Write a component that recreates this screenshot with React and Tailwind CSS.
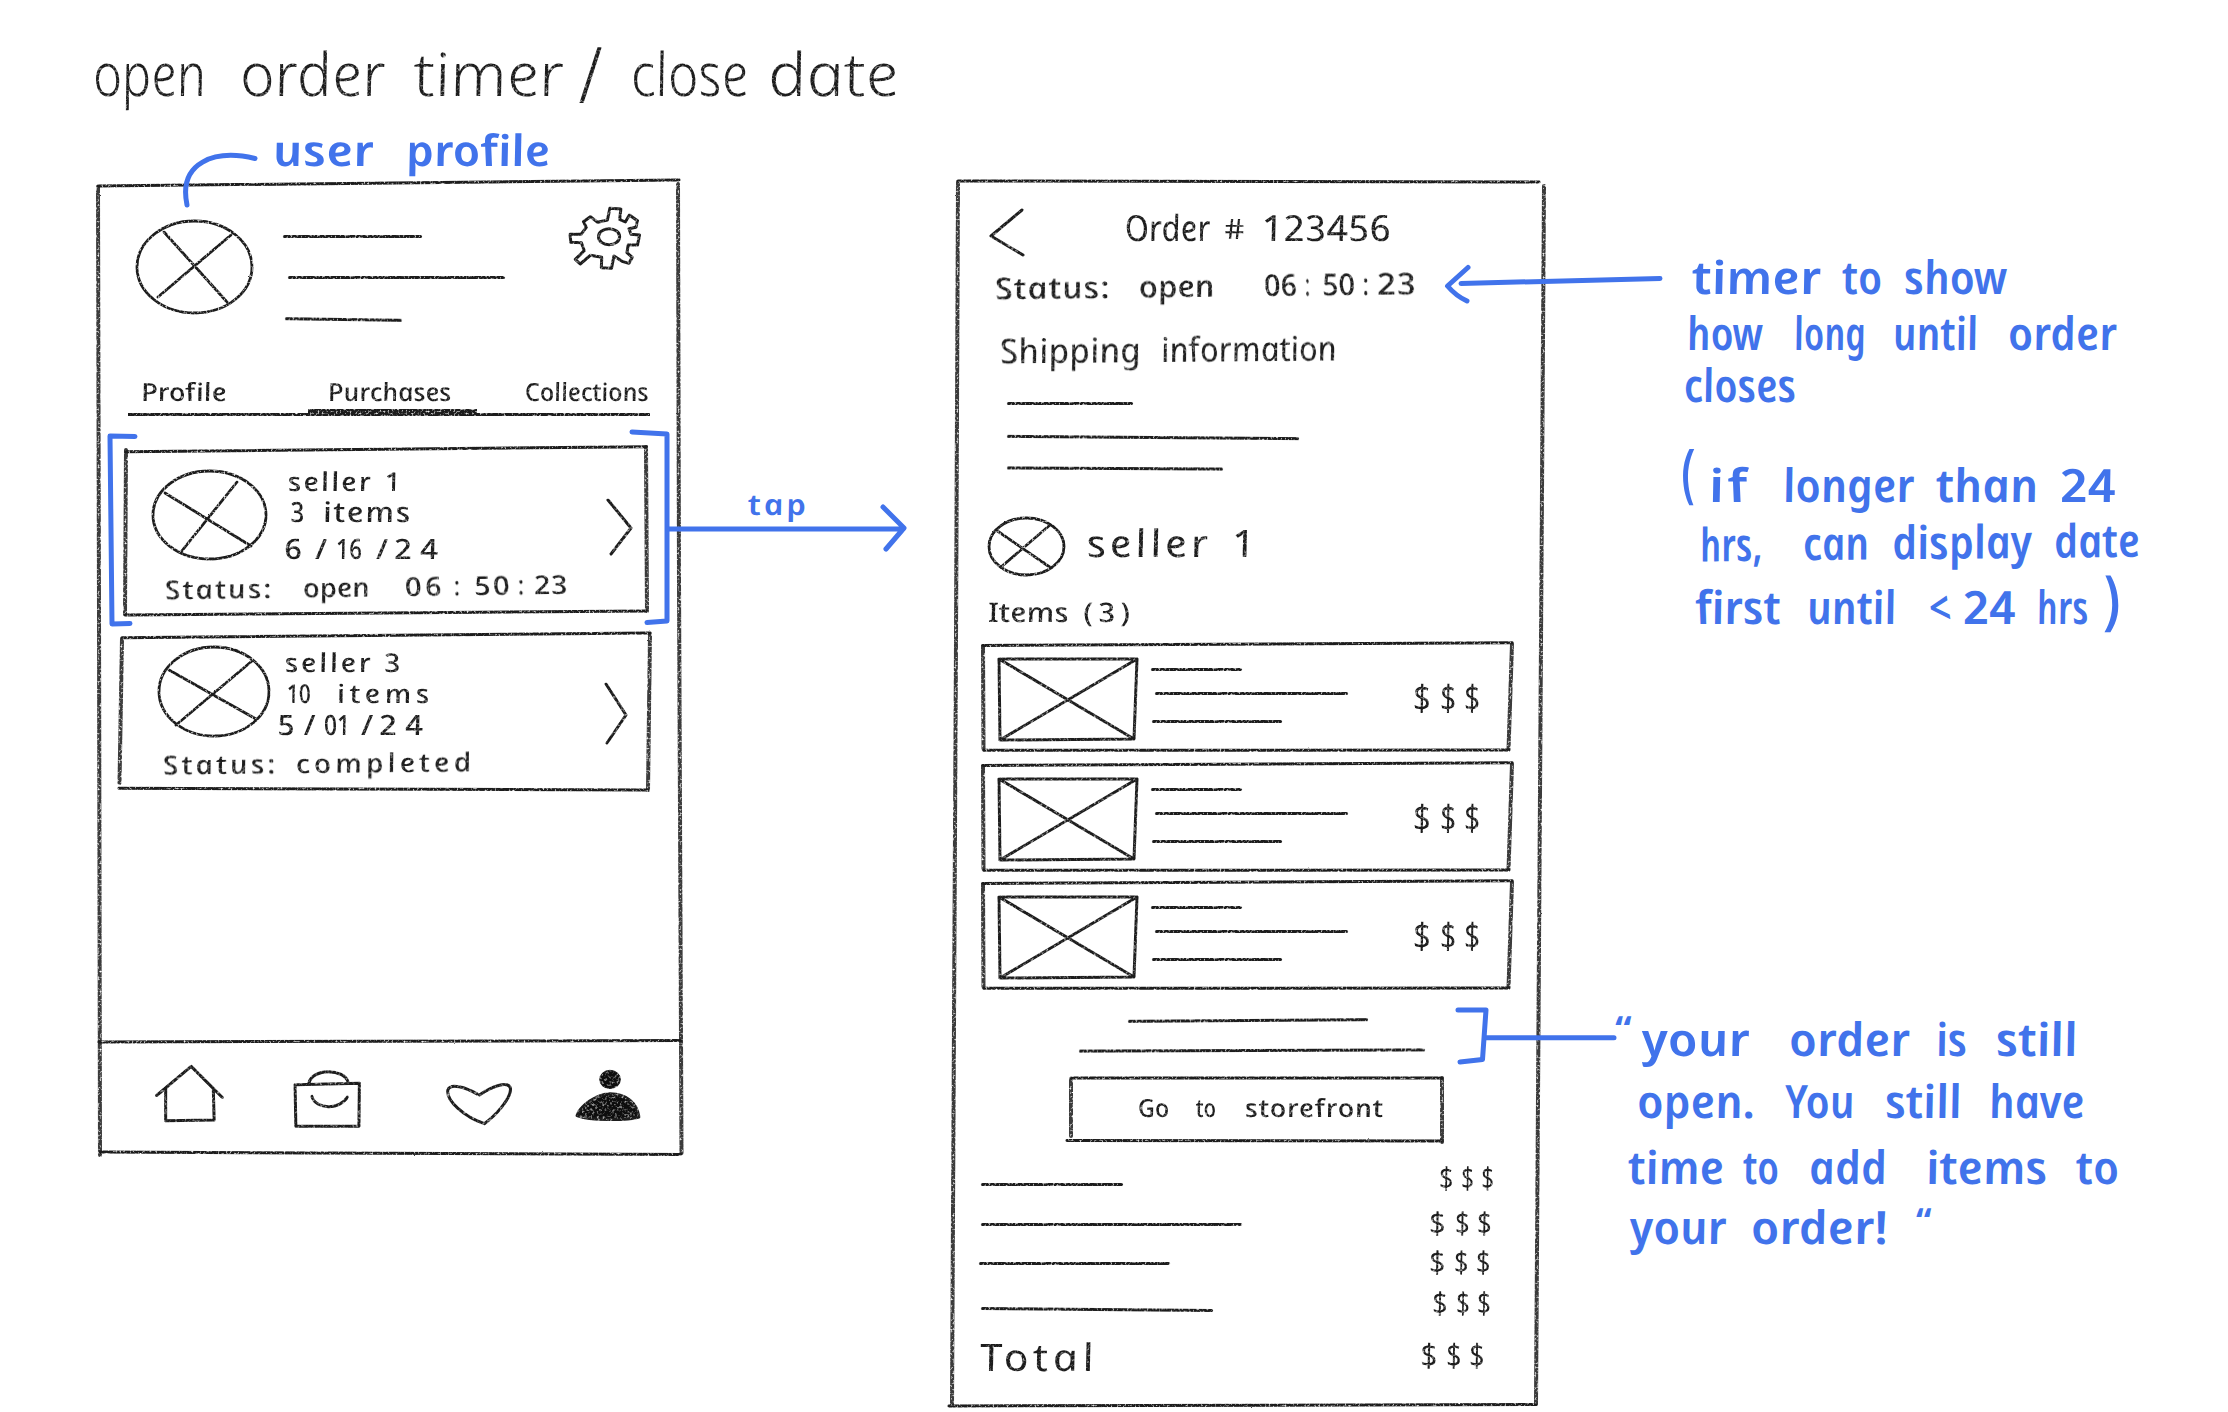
import { useLayoutEffect, useRef, useState } from "react";

const INK = "#1c1c1c";
const BLUE = "#4173eb";

// The italic f hangs below the line, so that letter is set upright
const renderLetters = (text) =>
    text.split(/(f)/).map((part, i) =>
        part === "f" ? (
            <span key={i} className="inline-block origin-[0_65%] -skew-x-[9deg] not-italic">
                f
            </span>
        ) : (
            part
        )
    );

// One handwritten word, fitted to the width it takes on the page:
// long words are squeezed, short ones get their letters spread out
const Word = ({ text, width, gap = 0, className = "" }) => {
    const ref = useRef(null);
    const [fit, setFit] = useState({ scale: 1, spacing: 0 });

    useLayoutEffect(() => {
        const ratio = width / ref.current.offsetWidth;
        if (ratio < 1 || text.length === 1) {
            setFit({ scale: Math.min(ratio, 1.15), spacing: 0 });
            return;
        }
        const scale = Math.min(ratio, 1.16);
        setFit({ scale, spacing: (width / scale - ref.current.offsetWidth) / (text.length - 1) });
    }, [text, width]);

    return (
        <span className={`block shrink-0 text-left ${className}`} style={{ width, marginLeft: gap }}>
            <span className="inline-block origin-[0_62%]" style={{ transform: `scaleX(${fit.scale}) skewX(11deg)`, letterSpacing: fit.spacing }}>
                <span ref={ref} className="inline-block whitespace-nowrap">
                    {renderLetters(text)}
                </span>
            </span>
        </span>
    );
};

// words: [text, width, gap before, extra classes]
const Words = ({ words, className = "" }) => (
    <div className={`flex shrink-0 font-['Noto_Sans','Open_Sans',sans-serif] italic leading-none ${className}`}>
        {words.map(([text, width, gap, extra], i) => (
            <Word key={i} text={text} width={width} gap={gap} className={extra} />
        ))}
    </div>
);

const Pencil = ({ words, className = "" }) => <Words words={words} className={`[filter:url(#graphite)] ${className}`} />;

const Price = ({ width = 66, className = "" }) => (
    <Pencil words={[["$", width * 0.28], ["$", width * 0.25, width * 0.12], ["$", width * 0.25, width * 0.1]]} className={className} />
);

const Rule = ({ className = "" }) => (
    <div className={`h-[3px] shrink-0 rounded-full bg-[#1c1c1c] [filter:url(#pencil)] ${className}`} />
);

// Pencil strokes drawn around a block, relative to its top left corner.
// The upright strokes are broader and paler than the level ones.
const Outline = ({ level, upright }) => (
    <svg className="pointer-events-none absolute inset-0 size-full overflow-visible" fill="none" strokeLinecap="round">
        <path d={upright} stroke="#3a3a3a" strokeWidth="4" filter="url(#pencil)" />
        <path d={level} stroke={INK} strokeWidth="3" filter="url(#pencil)" />
    </svg>
);

const Avatar = ({ cross, viewBox, className = "" }) => {
    const [, , w, h] = viewBox.split(" ").map(Number);
    return (
        <svg className={`shrink-0 overflow-visible ${className}`} viewBox={viewBox} fill="none" stroke={INK} strokeWidth="2.8" strokeLinecap="round">
            <g filter="url(#pencil)">
                <ellipse cx={w / 2} cy={h / 2} rx={w / 2 - 1} ry={h / 2 - 1} />
                <path d={cross} />
            </g>
        </svg>
    );
};

const Icon = ({ viewBox, className = "", children }) => (
    <svg className={`shrink-0 overflow-visible [filter:url(#graphite)] ${className}`} viewBox={viewBox} preserveAspectRatio="none" fill="none" stroke={INK} strokeWidth="3" strokeLinecap="round" strokeLinejoin="round">
        {children}
    </svg>
);

const Line = ({ d, fill }) => <path d={d} fill={fill} vectorEffect="non-scaling-stroke" />;

const ProfileScreen = () => (
    <section className="relative mt-[2px] ml-[98px] flex h-[972px] w-[583px] shrink-0 flex-col">
        <Outline
            level="M0 3 L581 -3 M1 859 L583 857.500 M2 969 L583 971.500"
            upright="M0 4 L1 430 L2 972 M580 1 L581 400 L583.500 970"
        />

        <div className="mt-[37px] flex h-[159px] pl-[38px]">
            <Avatar viewBox="0 0 117 94" className="h-[94px] w-[117px]" cross="M28 12 L91 82 M95 15 L22 77" />
            <div className="mt-[15px] ml-[30px] w-[285px]">
                <Rule className="w-[139px]" />
                <Rule className="mt-[38px] ml-[5px] w-[217px]" />
                <Rule className="mt-[39px] ml-[2px] w-[117px] rotate-[0.8deg]" />
            </div>
            <Icon viewBox="1195 558 182 192" className="-mt-[14px] h-[64px] w-[74px]">
                <Line d="M1292 600 L1298 565 L1325 567 L1322 598 L1336 606 L1346 585 L1366 602 L1362 622 L1345 626 L1350 643 L1371 645 L1366 675 L1343 675 L1340 698 L1353 712 L1345 730 L1330 725 L1308 708 L1302 745 L1277 743 L1278 712 L1250 706 L1225 732 L1213 718 L1235 692 L1228 668 L1202 667 L1200 643 L1227 643 L1240 622 L1233 605 L1250 590 L1268 607 Z" />
                <ellipse cx="1296" cy="650" rx="26" ry="24" vectorEffect="non-scaling-stroke" />
            </Icon>
        </div>

        <Pencil className="ml-[43px] text-[25px] font-medium" words={[["Profile", 86], ["Purchases", 124, 101], ["Collections", 124, 73]]} />
        <div className="mt-[5px] ml-[30px] h-[7px] w-[522px] shrink-0 border-b-[3px] border-[#1c1c1c] [filter:url(#pencil)]">
            <div className="ml-[180px] h-[5px] w-[169px] bg-[#1c1c1c]" />
        </div>

        <article className="relative mt-[33px] ml-[27px] h-[164px] w-[522px] shrink-0 pt-[21px]">
            <Outline level="M0.700 2.700 L521.500 -2.300 M521.500 162 L0 166" upright="M1 1 L0 165 M521 -2 L522 162" />
            <div className="flex h-[91px] pl-[27px]">
                <Avatar viewBox="0 0 115 90" className="h-[90px] w-[115px]" cross="M13 23 L99 76 M85 12 L29 82" />
                <div className="-mt-[2px] ml-[21px] w-[172px]">
                    <Pencil className="text-[26px] font-medium" words={[["seller", 83], ["1", 15, 14]]} />
                    <Pencil className="mt-[3px] ml-[2px] text-[28px] font-medium" words={[["3", 14], ["items", 87, 19]]} />
                    <Pencil className="mt-[9px] -ml-[4px] text-[28px] font-medium" words={[["6", 19], ["/", 13, 12], ["16", 26, 8], ["/", 14, 14], ["24", 44, 4]]} />
                </div>
                <Icon viewBox="0 0 23 54" className="mt-[30px] ml-[148px] h-[54px] w-[23px]">
                    <Line d="M0 0 L23 28 L3 54" />
                </Icon>
            </div>
            <Pencil className="mt-[12px] ml-[40px] -rotate-[0.800deg] text-[26px] font-medium" words={[["Status:", 106], ["open", 67, 32], ["06", 37, 35], [":", 6, 12], ["50", 36, 14], [":", 6, 8], ["23", 34, 10]]} />
        </article>

        <article className="relative mt-[23px] ml-[21px] h-[153px] w-[531px] shrink-0 pt-[10px]">
            <Outline level="M3 1.700 L531 -3 M0 152.300 L529 154" upright="M3 3 L0.500 147 M531 -2 L529 154" />
            <div className="flex h-[91px] pl-[39px]">
                <Avatar viewBox="0 0 112 91" className="h-[91px] w-[112px]" cross="M11 24 L98 73 M94 15 L18 79" />
                <div className="mt-[3px] ml-[15px] w-[161px]">
                    <Pencil className="text-[26px] font-medium" words={[["seller", 86], ["3", 17, 13]]} />
                    <Pencil className="mt-[5px] ml-[2px] text-[26px] font-medium" words={[["10", 24], ["items", 92, 26]]} />
                    <Pencil className="mt-[4px] -ml-[8px] text-[28px] font-medium" words={[["5", 17], ["/", 12, 10], ["01", 26, 8], ["/", 13, 11], ["24", 44, 5]]} />
                </div>
                <Icon viewBox="0 0 20 59" className="mt-[38px] ml-[160px] h-[59px] w-[20px]">
                    <Line d="M0 0 L20 31 L1 59" />
                </Icon>
            </div>
            <Pencil className="mt-[12px] ml-[44px] -rotate-[0.600deg] text-[26px] font-medium" words={[["Status:", 112], ["completed", 175, 21]]} />
        </article>

        <nav className="mt-[252px] flex h-[113px]">
            <Icon viewBox="184 132 168 172" className="mt-[24px] ml-[57px] h-[57px] w-[69px]">
                <Line d="M188 224 L272 136 L348 230 M210 205 L210 300 L328 298 L326 207" />
            </Icon>
            <Icon viewBox="522 148 166 174" className="mt-[29px] ml-[69px] h-[58px] w-[68px]">
                <Line d="M527 192 L684 188 L683 317 L529 317 Z M561 187 C568 142 648 142 657 186 M568 227 C578 268 636 268 655 229" />
            </Icon>
            <Icon viewBox="894 188 166 130" className="mt-[41px] ml-[84px] h-[43px] w-[68px]">
                <Line d="M972 224 C945 205 908 190 901 212 C896 245 942 294 990 314 C1015 292 1055 240 1054 208 C1050 182 1010 200 978 227" />
            </Icon>
            <Icon viewBox="1214 148 162 158" className="mt-[28px] ml-[62px] h-[53px] w-[66px]">
                <ellipse cx="1300" cy="179" rx="25" ry="27" fill="#111" />
                <Line fill="#111" d="M1219 287 C1226 258 1268 222 1300 222 C1340 222 1366 250 1371 291 C1340 302 1250 302 1219 287 Z" />
            </Icon>
        </nav>
    </section>
);

const ItemRow = ({ className = "" }) => (
    <li className={`relative flex h-[105px] w-[530px] shrink-0 pt-[14px] pl-[17px] ${className}`}>
        <Outline level="M0.500 0.500 L530 -2.300 M526.500 105 L1.500 105.300" upright="M1 2 L1.500 104 M530 -1 L526.500 105" />
        <Icon viewBox="0 0 138 81" className="h-[81px] w-[138px]">
            <path d="M0 0 L138 0 L135 80 L1 81 Z L135 80 M138 0 L1 81" />
        </Icon>
        <div className="mt-[9px] ml-[14px] w-[197px]">
            <Rule className="w-[91px]" />
            <Rule className="mt-[21px] ml-[4px] w-[193px]" />
            <Rule className="mt-[25px] ml-[1px] w-[130px]" />
        </div>
        <Price className="mt-[21px] ml-[65px] text-[36px]" width={68} />
    </li>
);

const OrderScreen = () => (
    <section className="relative flex h-[1225px] w-[593px] shrink-0 flex-col">
        <Outline
            level="M7 0 L588 1 M-2 1225 L585 1223.500"
            upright="M7 1 L5 460 L1 1224 M593 5 L590 460 L585 1223"
        />

        <div className="mt-[29px] flex h-[46px] pl-[40px]">
            <Icon viewBox="0 0 32 46" className="h-[46px] w-[32px]">
                <Line d="M31 0 L0 26 L32 45" />
            </Icon>
            <Pencil className="ml-[102px] text-[36px]" words={[["Order", 86], ["#", 22, 13, "text-[28px] pt-[4px]"], ["123456", 129, 16]]} />
        </div>
        <Pencil className="mt-[14px] ml-[44px] -rotate-[0.700deg] text-[30px] font-medium" words={[["Status:", 115], ["open", 76, 29], ["06", 33, 49], [":", 5, 8], ["50", 33, 12], [":", 6, 8], ["23", 39, 8]]} />
        <Pencil className="mt-[31px] ml-[49px] -rotate-[0.500deg] text-[34px]" words={[["Shipping", 141], ["information", 176, 20]]} />
        <Rule className="mt-[37px] ml-[56px] w-[126px]" />
        <Rule className="mt-[31px] ml-[56px] w-[292px] rotate-[0.450deg]" />
        <Rule className="mt-[28px] ml-[56px] w-[216px] rotate-[0.300deg]" />

        <div className="mt-[47px] flex h-[59px] pl-[37px]">
            <Avatar viewBox="0 0 77 59" className="h-[59px] w-[77px]" cross="M8 13 L63 51 M62 8 L13 50" />
            <Pencil className="mt-[6px] ml-[22px] text-[38px]" words={[["seller", 121], ["1", 23, 24]]} />
        </div>
        <Pencil className="mt-[22px] ml-[37px] text-[27px] font-medium" words={[["Items", 81], ["(3)", 47, 14]]} />

        <ul className="mt-[20px] flex flex-col pl-[31px]">
            <ItemRow />
            <ItemRow className="mt-[15px]" />
            <ItemRow className="mt-[13px]" />
        </ul>

        <Rule className="mt-[31px] ml-[177px] w-[240px] -rotate-[0.400deg]" />
        <Rule className="mt-[27px] ml-[128px] w-[346px] -rotate-[0.200deg]" />

        <button type="button" className="relative mt-[26px] ml-[117px] h-[63px] w-[374px] shrink-0 pb-[5px] pl-[70px]">
            <Outline level="M3 0 L374 0 M-1 62.500 L374 63" upright="M3 2 L3 58 M374 0 L374 64" />
            <Pencil className="text-[25px] font-medium" words={[["Go", 31], ["to", 20, 27], ["storefront", 138, 29]]} />
        </button>

        <div className="mt-[21px] ml-[30px] flex h-[30px]">
            <Rule className="mt-[21px] w-[142px]" />
            <Price className="mt-px ml-[316px] text-[30px]" width={56} />
        </div>
        <div className="mt-[15px] ml-[30px] flex h-[30px]">
            <Rule className="mt-[16px] w-[261px]" />
            <Price className="mt-px ml-[187px] text-[30px]" width={64} />
        </div>
        <div className="mt-[9px] ml-[28px] flex h-[30px]">
            <Rule className="mt-[16px] w-[191px]" />
            <Price className="mt-px ml-[259px] text-[30px]" width={63} />
        </div>
        <div className="mt-[12px] ml-[30px] flex h-[30px]">
            <Rule className="mt-[20px] w-[232px] rotate-[0.500deg]" />
            <Price className="ml-[219px] text-[30px]" width={60} />
        </div>
        <div className="mt-[19px] ml-[29px] flex h-[40px]">
            <Pencil className="text-[38px]" words={[["Total", 114]]} />
            <Price className="mt-[2px] ml-[326px] text-[32px]" width={66} />
        </div>
    </section>
);

const Notes = () => (
    <aside className="w-[614px] shrink-0 pl-[71px] text-[46px] font-semibold text-[#4173eb]">
        <Words className="mt-[72px] ml-[77px]" words={[["timer", 129], ["to", 40, 21], ["show", 103, 22]]} />
        <Words className="mt-[10px] ml-[72px]" words={[["how", 76], ["long", 72, 31], ["until", 85, 27], ["order", 109, 30]]} />
        <Words className="mt-[6px] ml-[69px]" words={[["closes", 112]]} />

        <Words className="mt-[54px] ml-[66px]" words={[["(", 14, 0, "-mt-[12px] scale-y-[1.4]"], ["if", 38, 14], ["longer", 132, 36], ["than", 102, 21], ["24", 56, 22]]} />
        <Words className="mt-[11px] ml-[85px] -rotate-[0.600deg]" words={[["hrs,", 62], ["can", 66, 41], ["display", 140, 23], ["date", 86, 22]]} />
        <Words className="mt-[19px] ml-[80px]" words={[["first", 86], ["until", 89, 26], ["<", 21, 33], ["24", 53, 13], ["hrs", 51, 21], [")", 18, 16, "scale-y-[1.4] -mt-[8px]"]]} />

        <Words className="mt-[386px]" words={[["“", 17, 0, "-mt-[4px] text-[36px]"], ["your", 108, 10], ["order", 121, 39], ["is", 31, 26], ["still", 82, 29]]} />
        <Words className="mt-[16px] ml-[22px]" words={[["open.", 118], ["You", 70, 30], ["still", 77, 30], ["have", 96, 27]]} />
        <Words className="mt-[20px] ml-[13px]" words={[["time", 96], ["to", 36, 19], ["add", 78, 30], ["items", 121, 39], ["to", 43, 29]]} />
        <Words className="mt-[14px] ml-[15px]" words={[["your", 97], ["order!", 137, 24], ["“", 16, 28, "text-[36px]"]]} />
    </aside>
);

// Blue brackets and arrows that run over the screens
const Connectors = () => (
    <svg className="pointer-events-none absolute inset-0 h-[1412px] w-[2228px]" fill="none" stroke={BLUE} strokeWidth="5" strokeLinecap="round" strokeLinejoin="round">
        <path d="M255 158.500 C215 149 178 162 187 205" />
        <path d="M135 436.500 L110 436 L112 624 L130 623.500" />
        <path d="M632 432 L667 434 L667 621 L647 622.500" />
        <path d="M668 529 L903 529 M883 507 L904 528 L886 549" />
        <path d="M1660 278.500 L1461 283.500 M1468 267.500 L1447.500 286 Q1456 296 1467 301" />
        <path d="M1458 1010 L1486 1010 L1482.500 1059.500 L1460 1062 M1485 1037.700 L1614 1037.700" />
    </svg>
);

const App = () => (
    <main className="relative h-[1412px] w-[2228px] overflow-hidden bg-white text-[#1c1c1c]">
        <svg className="absolute size-0" aria-hidden="true">
            <filter id="pencil" filterUnits="userSpaceOnUse" x="-10" y="-10" width="2300" height="1500">
                <feTurbulence type="fractalNoise" baseFrequency="0.5" numOctaves="2" result="noise" />
                <feDisplacementMap in="SourceGraphic" in2="noise" scale="1.5" result="rough" />
                <feColorMatrix in="noise" type="matrix" values="0 0 0 0 0  0 0 0 0 0  0 0 0 0 0  3 0 0 0 -0.5" result="grain" />
                <feComposite in="rough" in2="grain" operator="in" />
            </filter>
            <filter id="graphite" filterUnits="userSpaceOnUse" x="-10" y="-10" width="2300" height="1500">
                <feTurbulence type="fractalNoise" baseFrequency="0.4" numOctaves="2" result="noise" />
                <feDisplacementMap in="SourceGraphic" in2="noise" scale="1.2" result="rough" />
                <feColorMatrix in="noise" type="matrix" values="0 0 0 0 0  0 0 0 0 0  0 0 0 0 0  2 0 0 0 0" result="grain" />
                <feComposite in="rough" in2="grain" operator="in" />
            </filter>
        </svg>

        <header className="flex h-[181px] flex-col pt-[43px]">
            <Pencil className="ml-[93px] text-[60px] font-light" words={[["open", 113], ["order", 146, 34], ["timer", 151, 28], ["/", 28, 14, "scale-y-[1.3]"], ["close", 117, 24], ["date", 131, 20]]} />
            <Words className="mt-[25px] ml-[273px] text-[43px] font-semibold text-[#4173eb]" words={[["user", 101], ["profile", 144, 32]]} />
        </header>

        <div className="flex">
            <ProfileScreen />
            <div className="w-[270px] shrink-0 pt-[308px] pl-[67px] text-[#4173eb]">
                <Words className="text-[29px] font-semibold" words={[["tap", 58]]} />
            </div>
            <OrderScreen />
            <Notes />
        </div>

        <Connectors />
    </main>
);

export default App;
